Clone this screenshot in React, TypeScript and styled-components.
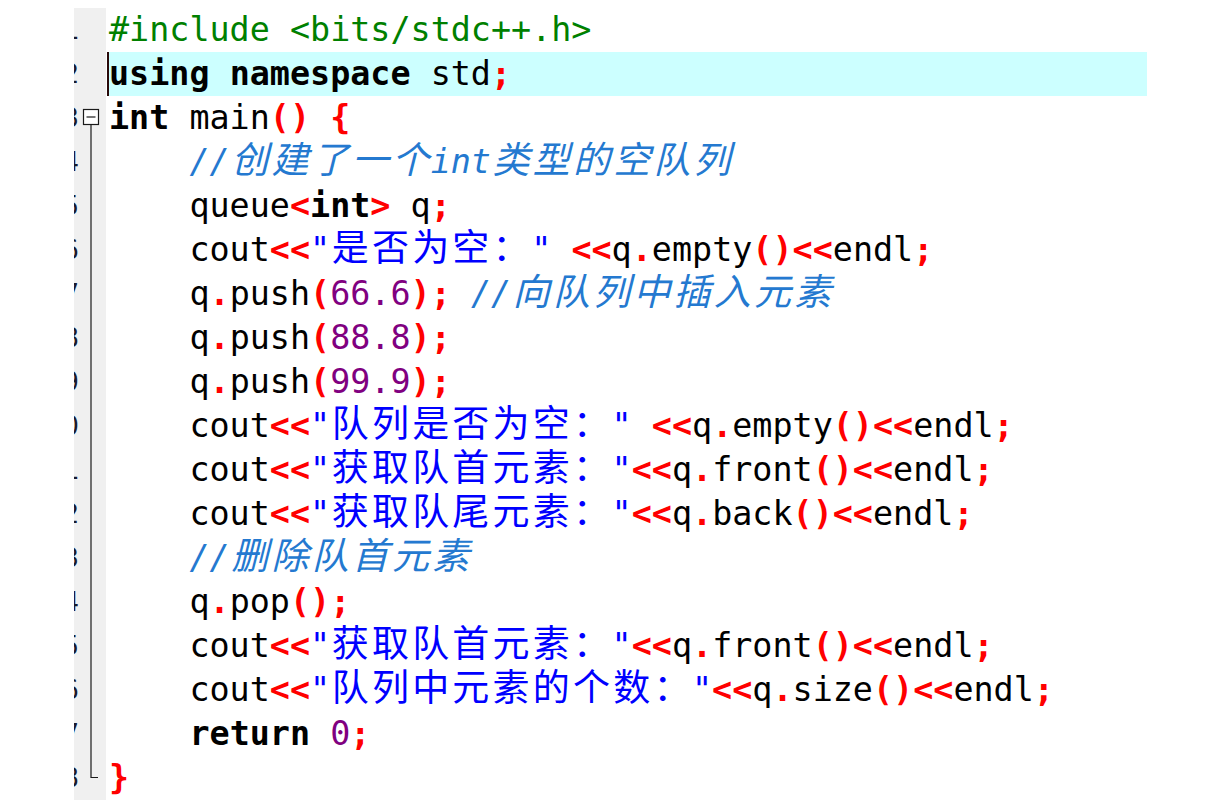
import React from "react";
import styled, { createGlobalStyle } from "styled-components";

type Kind = "p" | "k" | "s" | "q" | "n" | "c" | "h";
type Tok = [Kind, string];

const Global = createGlobalStyle`
  html, body { margin: 0; padding: 0; background: #ffffff; }
  body { width: 1220px; height: 810px; overflow: hidden; }
`;

const MONO = `"DejaVu Sans Mono", "Noto Sans CJK SC", monospace`;

const Editor = styled.div`
  display: flex;
  align-items: flex-start;
  padding: 8px 0 0 74px;
  font-family: ${MONO};
`;

const Gutter = styled.div`
  display: flex;
  flex-direction: column;
  width: 32px;
  background: #f0f0f0;
  overflow: hidden;
`;

const GutterRow = styled.div`
  display: flex;
  height: 44px;
  align-items: center;
`;

const LineNo = styled.div`
  display: flex;
  justify-content: flex-end;
  width: 5px;
  flex: none;
  font-size: 26px;
  color: #1a1a2a;
  white-space: nowrap;
`;

const FoldCell = styled.svg`
  display: block;
  flex: none;
  margin-left: 3px;
  width: 18px;
  height: 44px;
`;

const Code = styled.div`
  display: flex;
  flex-direction: column;
  width: 1040px;
  margin-left: 1px;
`;

const Line = styled.div<{ $active?: boolean }>`
  height: 44px;
  line-height: 44px;
  padding-left: 2px;
  font-size: 33.4px;
  white-space: pre;
  color: #000000;
  background: ${(p) => (p.$active ? "#ccffff" : "transparent")};
  box-shadow: ${(p) => (p.$active ? "inset 2px 0 0 #2a0a0a" : "none")};
`;

const colors: Record<Kind, string> = {
  p: "#000000",
  k: "#000000",
  s: "#ff0000",
  q: "#0000ff",
  n: "#800080",
  c: "#2479d0",
  h: "#008000",
};

const Token = styled.span<{ $k: Kind }>`
  color: ${(p) => colors[p.$k]};
  font-weight: ${(p) => (p.$k === "k" || p.$k === "s" ? 700 : 400)};
  font-style: ${(p) => (p.$k === "c" ? "italic" : "normal")};
`;

const Wide = styled.span`
  display: inline-block;
  width: 2ch;
  text-align: center;
  overflow: visible;
  white-space: nowrap;
`;

const WideGlyph = styled.span`
  font-size: 37px;
  line-height: 1;
`;

const isWide = (ch: string) => /[\u3000-\u9fff\uff00-\uffef]/.test(ch);

function renderText(text: string) {
  const out: React.ReactNode[] = [];
  let buf = "";
  let i = 0;
  for (const ch of text) {
    if (isWide(ch)) {
      if (buf) {
        out.push(buf);
        buf = "";
      }
      out.push(
        <Wide key={i}>
          <WideGlyph>{ch}</WideGlyph>
        </Wide>
      );
    } else {
      buf += ch;
    }
    i++;
  }
  if (buf) out.push(buf);
  return out;
}

const I = "    ";
const coutStr = (s: string, spaced: boolean, method: string): Tok[] => [
  ["p", I + "cout"],
  ["s", "<<"],
  ["q", `"${s}"`],
  ["p", spaced ? " " : ""],
  ["s", "<<"],
  ["p", "q"],
  ["s", "."],
  ["p", method],
  ["s", "()"],
  ["s", "<<"],
  ["p", "endl"],
  ["s", ";"],
];
const push = (n: string, rest: Tok[] = []): Tok[] => [
  ["p", I + "q"],
  ["s", "."],
  ["p", "push"],
  ["s", "("],
  ["n", n],
  ["s", ");"],
  ...rest,
];

const lines: Tok[][] = [
  [["h", "#include <bits/stdc++.h>"]],
  [["k", "using"], ["p", " "], ["k", "namespace"], ["p", " std"], ["s", ";"]],
  [["k", "int"], ["p", " main"], ["s", "()"], ["p", " "], ["s", "{"]],
  [["p", I], ["c", "//创建了一个int类型的空队列"]],
  [["p", I + "queue"], ["s", "<"], ["k", "int"], ["s", ">"], ["p", " q"], ["s", ";"]],
  coutStr("是否为空：", true, "empty"),
  push("66.6", [["p", " "], ["c", "//向队列中插入元素"]]),
  push("88.8"),
  push("99.9"),
  coutStr("队列是否为空：", true, "empty"),
  coutStr("获取队首元素：", false, "front"),
  coutStr("获取队尾元素：", false, "back"),
  [["p", I], ["c", "//删除队首元素"]],
  [["p", I + "q"], ["s", "."], ["p", "pop"], ["s", "();"]],
  coutStr("获取队首元素：", false, "front"),
  coutStr("队列中元素的个数：", false, "size"),
  [["p", I], ["k", "return"], ["p", " "], ["n", "0"], ["s", ";"]],
  [["s", "}"]],
];

function Fold({ kind }: { kind: "none" | "start" | "mid" | "end" }) {
  return (
    <FoldCell viewBox="0 0 18 44">
      {kind === "start" && (
        <g stroke="#1a1a1a" strokeWidth="1.2" fill="#ffffff">
          <rect x="1.5" y="13.5" width="15" height="15" />
          <line x1="4.5" y1="21" x2="13.5" y2="21" />
          <line x1="9" y1="28.5" x2="9" y2="44" />
        </g>
      )}
      {kind === "mid" && (
        <line x1="9" y1="0" x2="9" y2="44" stroke="#1a1a1a" strokeWidth="1.2" />
      )}
      {kind === "end" && (
        <path d="M9 0 V21.5 H16" stroke="#1a1a1a" strokeWidth="1.2" fill="none" />
      )}
    </FoldCell>
  );
}

export default function App() {
  return (
    <>
      <Global />
      <Editor>
        <Gutter>
          {lines.map((_, i) => {
            const kind =
              i === 2 ? "start" : i === lines.length - 1 ? "end" : i > 2 ? "mid" : "none";
            return (
              <GutterRow key={i}>
                <LineNo>{i + 1}</LineNo>
                <Fold kind={kind} />
              </GutterRow>
            );
          })}
        </Gutter>
        <Code>
          {lines.map((toks, i) => (
            <Line key={i} $active={i === 1}>
              {toks.map(([k, t], j) => (
                <Token key={j} $k={k}>
                  {renderText(t)}
                </Token>
              ))}
            </Line>
          ))}
        </Code>
      </Editor>
    </>
  );
}
